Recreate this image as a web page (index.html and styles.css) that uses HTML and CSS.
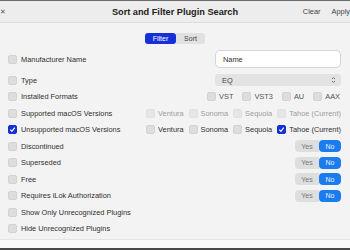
FILE: index.html
```html
<!DOCTYPE html>
<html lang="en">
<head>
    <meta charset="UTF-8">
    <meta name="viewport" content="width=device-width, initial-scale=1.0">
    <title>Sort and Filter Plugin Search</title>
    <link rel="stylesheet" href="styles.css">
</head>
<body>
<div class="window">
    <header class="titlebar">
        <span class="close">&#x2715;</span>
        <h1 class="title">Sort and Filter Plugin Search</h1>
        <div class="actions">
            <button class="action">Clear</button>
            <button class="action">Apply</button>
        </div>
    </header>

    <main class="content">
        <div class="segmented">
            <button class="seg active">Filter</button>
            <button class="seg">Sort</button>
        </div>

        <div class="rows">
            <div class="row row-tall">
                <label class="opt"><span class="box"></span>Manufacturer Name</label>
                <div class="textfield">Name</div>
            </div>

            <div class="row">
                <label class="opt"><span class="box"></span>Type</label>
                <div class="select">
                    <span>EQ</span>
                    <svg class="chevrons" width="5" height="8" viewBox="0 0 5 8">
                        <path d="M1 3 L2.5 1.5 L4 3 M1 5 L2.5 6.5 L4 5" fill="none" stroke="#666" stroke-width="0.9"/>
                    </svg>
                </div>
            </div>

            <div class="row">
                <label class="opt"><span class="box"></span>Installed Formats</label>
                <div class="group formats">
                    <label class="item"><span class="box"></span>VST</label>
                    <label class="item"><span class="box"></span>VST3</label>
                    <label class="item"><span class="box"></span>AU</label>
                    <label class="item"><span class="box"></span>AAX</label>
                </div>
            </div>

            <div class="row">
                <label class="opt"><span class="box"></span>Supported macOS Versions</label>
                <div class="group versions disabled">
                    <label class="item"><span class="box"></span>Ventura</label>
                    <label class="item"><span class="box"></span>Sonoma</label>
                    <label class="item"><span class="box"></span>Sequoia</label>
                    <label class="item"><span class="box"></span>Tahoe (Current)</label>
                </div>
            </div>

            <div class="row">
                <label class="opt"><span class="box on"><svg width="7" height="7" viewBox="0 0 7 7"><path d="M1.3 3.7 L2.9 5.3 L5.8 1.6" fill="none" stroke="#fff" stroke-width="1.2"/></svg></span>Unsupported macOS Versions</label>
                <div class="group versions">
                    <label class="item"><span class="box"></span>Ventura</label>
                    <label class="item"><span class="box"></span>Sonoma</label>
                    <label class="item"><span class="box"></span>Sequoia</label>
                    <label class="item"><span class="box on"><svg width="7" height="7" viewBox="0 0 7 7"><path d="M1.3 3.7 L2.9 5.3 L5.8 1.6" fill="none" stroke="#fff" stroke-width="1.2"/></svg></span>Tahoe (Current)</label>
                </div>
            </div>

            <div class="row">
                <label class="opt"><span class="box"></span>Discontinued</label>
                <div class="toggle"><span class="yes">Yes</span><span class="no">No</span></div>
            </div>

            <div class="row">
                <label class="opt"><span class="box"></span>Superseded</label>
                <div class="toggle"><span class="yes">Yes</span><span class="no">No</span></div>
            </div>

            <div class="row">
                <label class="opt"><span class="box"></span>Free</label>
                <div class="toggle"><span class="yes">Yes</span><span class="no">No</span></div>
            </div>

            <div class="row">
                <label class="opt"><span class="box"></span>Requires iLok Authorization</label>
                <div class="toggle"><span class="yes">Yes</span><span class="no">No</span></div>
            </div>

            <div class="row">
                <label class="opt"><span class="box"></span>Show Only Unrecognized Plugins</label>
            </div>

            <div class="row">
                <label class="opt"><span class="box"></span>Hide Unrecognized Plugins</label>
            </div>
        </div>
    </main>

    <footer class="footer"></footer>
</div>
</body>
</html>
```

FILE: styles.css
```css
/* styles.css */

body {
    margin: 0;
    font-family: "Liberation Sans", Arial, sans-serif;
    color: #2f2f2f;
    overflow: hidden;
}

.window {
    height: 250px;
    display: flex;
    flex-direction: column;
    background-color: #f3f3f3;
}

/* title bar */
.titlebar {
    display: grid;
    grid-template-columns: 1fr auto 1fr;
    align-items: center;
    height: 21px;
    border-top: 1px solid #6a6a6a;
    border-bottom: 1px solid #dcdcdc;
    background-color: #ededed;
}

.close {
    margin-left: 0;
    font-size: 7px;
    color: #555;
}

.title {
    margin: 0;
    font-size: 9.2px;
    font-weight: bold;
    color: #222;
}

.actions {
    display: flex;
    justify-content: flex-end;
    gap: 11px;
}

.action {
    padding: 0;
    border: none;
    background: none;
    font-family: inherit;
    font-size: 7.4px;
    color: #444;
}

/* content */
.content {
    flex: 1;
    padding-top: 10px;
}

.segmented {
    display: flex;
    justify-content: center;
    margin-bottom: 5px;
}

.seg {
    height: 11px;
    padding: 0;
    border: none;
    font-family: inherit;
    font-size: 7px;
    background-color: #e1e1e1;
    color: #444;
}

.seg:first-child {
    width: 31px;
    border-radius: 3px;
}

.seg:last-child {
    width: 29px;
    border-radius: 0 3px 3px 0;
}

.seg.active {
    background-color: #1430d6;
    color: #fff;
}

.rows {
    padding: 0 9px 0 8px;
}

.row {
    display: flex;
    align-items: center;
    justify-content: space-between;
    height: 16.5px;
}

.row-tall {
    height: 20px;
    margin-bottom: 2.75px;
}

.opt, .item {
    display: flex;
    align-items: center;
    font-size: 7.4px;
    white-space: nowrap;
}

.opt {
    gap: 4px;
}

.item {
    gap: 3px;
}

.box {
    display: flex;
    align-items: center;
    justify-content: center;
    width: 9px;
    height: 9px;
    box-sizing: border-box;
    border: 1px solid #d3d3d3;
    border-radius: 2px;
    background-color: #dddddd;
}

.box.on {
    border-color: #1430d6;
    background-color: #1430d6;
}

/* controls */
.textfield {
    width: 126px;
    height: 18px;
    box-sizing: border-box;
    padding-left: 7px;
    display: flex;
    align-items: center;
    border: 1px solid #d6d6d6;
    border-radius: 5px;
    background-color: #fff;
    font-size: 7.4px;
    color: #333;
}

.select {
    width: 126px;
    height: 12px;
    box-sizing: border-box;
    padding: 0 5px 0 7px;
    display: flex;
    align-items: center;
    justify-content: space-between;
    border-radius: 3px;
    background-color: #e3e3e3;
    font-size: 7.4px;
    color: #444;
}

.group {
    display: flex;
    align-items: center;
}

.formats {
    gap: 9px;
    margin-right: 1px;
}

.formats .item {
    color: #555;
}

.versions {
    gap: 5px;
}

.versions.disabled .item {
    color: #9c9c9c;
}

.versions.disabled .box {
    background-color: #e6e6e6;
    border-color: #e0e0e0;
}

.toggle {
    display: flex;
    height: 12px;
    border-radius: 4px;
    overflow: hidden;
    font-size: 7px;
}

.toggle span {
    display: flex;
    align-items: center;
    justify-content: center;
}

.yes {
    width: 24px;
    background-color: #dedede;
    color: #777;
}

.no {
    width: 22px;
    border-radius: 4px;
    background-color: #1b7cf0;
    color: #eaf2ff;
}

.footer {
    height: 8px;
    border-top: 1px solid #e4e4e4;
    border-bottom: 2px solid #4a4a4a;
    background-color: #fbfbfb;
}
```
